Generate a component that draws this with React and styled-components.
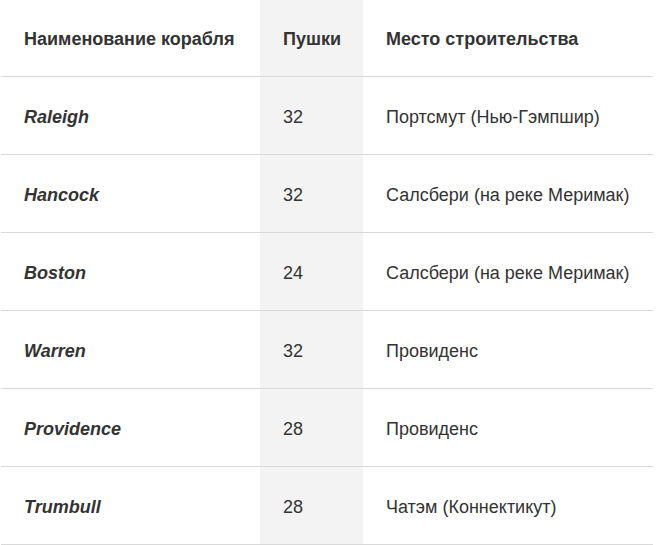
import styled, { createGlobalStyle } from 'styled-components';

const Global = createGlobalStyle`
  body {
    margin: 0;
    background: #fff;
    font-family: "Liberation Sans", Arial, sans-serif;
    color: #333;
  }
`;

const Wrap = styled.div`
  padding-left: 1px;
  width: 652px;
`;

const Table = styled.table`
  width: 100%;
  border-collapse: collapse;
  border-spacing: 0;
  table-layout: fixed;
  font-size: 18px;
  line-height: 22px;
`;

const Cell = styled.td`
  padding: 3px 23px 0;
  height: 78px;
  text-align: left;
  vertical-align: middle;
  white-space: nowrap;
  border-bottom: 1px solid #d9d9d9;
  background: ${(p) => (p.$shade ? '#f3f3f3' : 'transparent')};
  font-weight: ${(p) => (p.$strong ? 700 : 400)};
  font-style: ${(p) => (p.$italic ? 'italic' : 'normal')};
  box-sizing: border-box;
`;

const Head = styled(Cell).attrs({ as: 'th' })`
  height: 76px;
  font-weight: 700;
  padding-top: 3px;
`;

const ships = [
  { name: 'Raleigh', guns: 32, place: 'Портсмут (Нью-Гэмпшир)' },
  { name: 'Hancock', guns: 32, place: 'Салсбери (на реке Меримак)' },
  { name: 'Boston', guns: 24, place: 'Салсбери (на реке Меримак)' },
  { name: 'Warren', guns: 32, place: 'Провиденс' },
  { name: 'Providence', guns: 28, place: 'Провиденс' },
  { name: 'Trumbull', guns: 28, place: 'Чатэм (Коннектикут)' },
];

export default function App() {
  return (
    <Wrap>
      <Global />
      <Table>
        <colgroup>
          <col style={{ width: 259 }} />
          <col style={{ width: 103 }} />
          <col />
        </colgroup>
        <thead>
          <tr>
            <Head>Наименование корабля</Head>
            <Head $shade>Пушки</Head>
            <Head>Место строительства</Head>
          </tr>
        </thead>
        <tbody>
          {ships.map((s) => (
            <tr key={s.name}>
              <Cell $strong $italic>{s.name}</Cell>
              <Cell $shade>{s.guns}</Cell>
              <Cell>{s.place}</Cell>
            </tr>
          ))}
        </tbody>
      </Table>
    </Wrap>
  );
}
